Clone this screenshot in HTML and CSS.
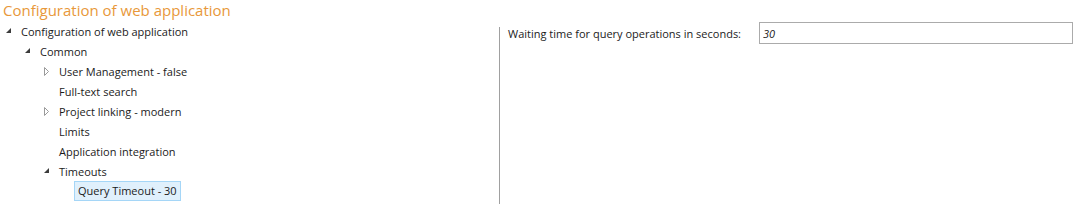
FILE: index.html
```html
<!DOCTYPE html>
<html lang="en">
<head>
    <meta charset="UTF-8">
    <title>Configuration of web application</title>
    <link rel="stylesheet" href="styles.css">
</head>
<body>
    <h1 class="page-title">Configuration of web application</h1>
    <div class="layout">
        <div class="tree-pane">
            <ul class="tree">
                <li class="row level-0">
                    <span class="toggle"><svg width="6" height="6"><polygon points="0,5 5,5 5,0" fill="#3c3c3c"/></svg></span>
                    <span class="label">Configuration of web application</span>
                </li>
                <li class="row level-1">
                    <span class="toggle"><svg width="6" height="6"><polygon points="0,5 5,5 5,0" fill="#3c3c3c"/></svg></span>
                    <span class="label">Common</span>
                </li>
                <li class="row level-2">
                    <span class="toggle"><svg width="6" height="9"><polygon points="0.5,0.5 4.5,4.5 0.5,8.5" fill="none" stroke="#9a9a9a"/></svg></span>
                    <span class="label">User Management - false</span>
                </li>
                <li class="row level-2">
                    <span class="toggle"></span>
                    <span class="label">Full-text search</span>
                </li>
                <li class="row level-2">
                    <span class="toggle"><svg width="6" height="9"><polygon points="0.5,0.5 4.5,4.5 0.5,8.5" fill="none" stroke="#9a9a9a"/></svg></span>
                    <span class="label">Project linking - modern</span>
                </li>
                <li class="row level-2">
                    <span class="toggle"></span>
                    <span class="label">Limits</span>
                </li>
                <li class="row level-2">
                    <span class="toggle"></span>
                    <span class="label">Application integration</span>
                </li>
                <li class="row level-2">
                    <span class="toggle"><svg width="6" height="6"><polygon points="0,5 5,5 5,0" fill="#3c3c3c"/></svg></span>
                    <span class="label">Timeouts</span>
                </li>
                <li class="row level-3">
                    <span class="toggle"></span>
                    <span class="label selected">Query Timeout - 30</span>
                </li>
            </ul>
        </div>
        <div class="splitter"></div>
        <div class="detail-pane">
            <div class="field-row">
                <label for="queryTimeout">Waiting time for query operations in seconds:</label>
                <input type="text" id="queryTimeout" value="30">
            </div>
        </div>
    </div>
</body>
</html>
```
FILE: styles.css
```css
body {
    margin: 0;
    font-family: "Open Sans", "Noto Sans", sans-serif;
    font-size: 11px;
    color: #1b1b1b;
    background: #fff;
}
.page-title {
    margin: 0;
    padding-left: 3px;
    font-size: 15px;
    font-weight: normal;
    line-height: 20px;
    color: #e8983a;
}
.layout {
    display: flex;
    margin-top: 1px;
    height: 183px;
}
.tree-pane {
    width: 499px;
}
.tree {
    list-style: none;
    margin: 0;
    padding: 0;
}
.row {
    display: flex;
    align-items: center;
    height: 20px;
}
.level-0 { padding-left: 4px; }
.level-1 { padding-left: 23px; }
.level-2 { padding-left: 42px; }
.level-3 { padding-left: 61px; }
.toggle {
    width: 17px;
    display: flex;
    align-items: center;
    padding-left: 2px;
    box-sizing: border-box;
}
.toggle svg {
    display: block;
}
.label {
    white-space: nowrap;
}
.label.selected {
    margin-left: -4px;
    padding: 0 3px;
    line-height: 18px;
    background: #e0f0fc;
    border: 1px solid #a5d6f7;
}
.splitter {
    width: 1px;
    margin-top: 6px;
    background: #a0a0a0;
}
.detail-pane {
    flex: 1;
    padding-left: 8px;
}
.field-row {
    display: flex;
    align-items: center;
    height: 24px;
}
.field-row label {
    width: 251px;
    flex: none;
    white-space: nowrap;
}
.field-row input {
    width: 314px;
    height: 22px;
    box-sizing: border-box;
    border: 1px solid #ababab;
    padding: 0 3px;
    font-family: inherit;
    font-size: 11px;
    font-style: italic;
    color: #1b1b1b;
    outline: none;
}
```
